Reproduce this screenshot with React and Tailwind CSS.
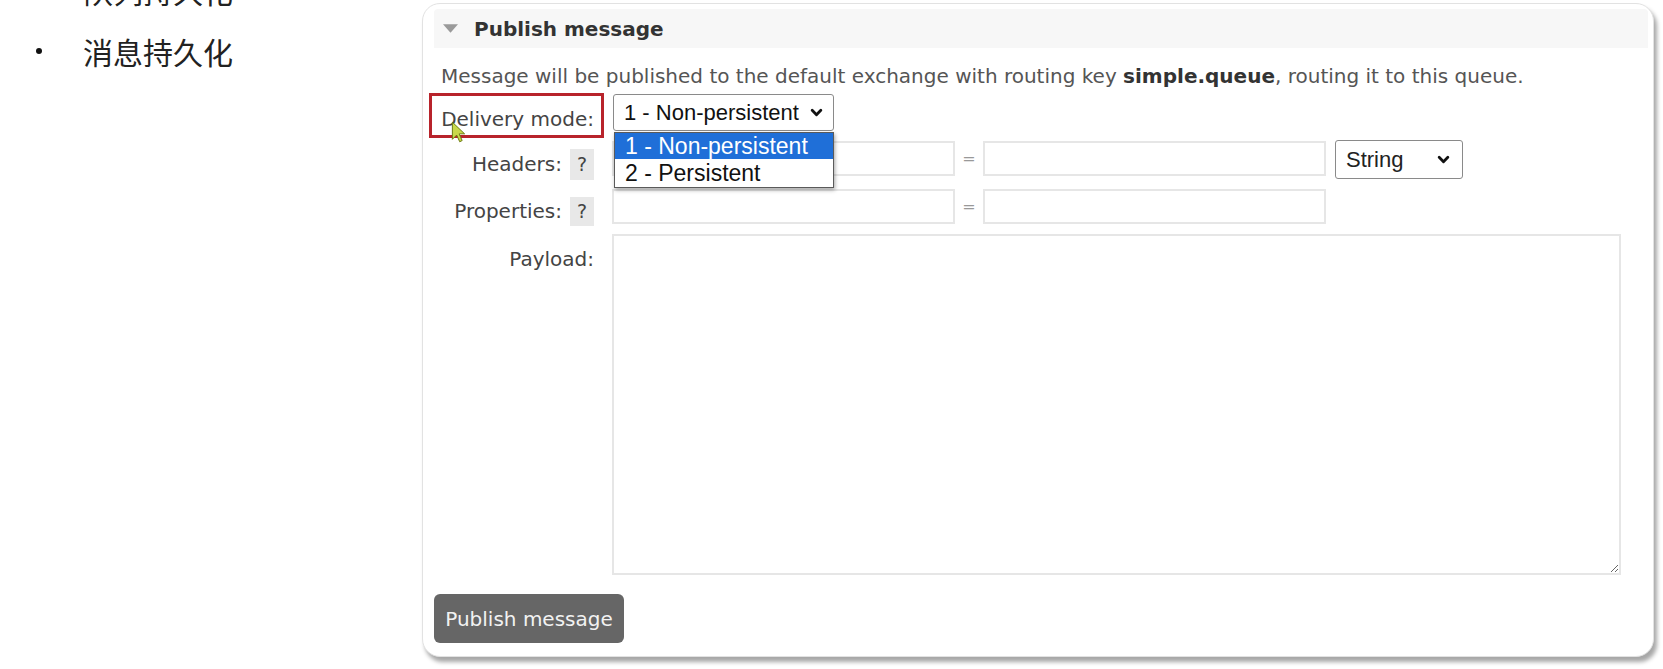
import React from "react";

const Chevron = ({ className }) => (
  <svg viewBox="0 0 12 8" className={className} fill="none" stroke="#111" strokeWidth="2.6" strokeLinecap="round" strokeLinejoin="round">
    <path d="M2 2 L6 6 L10 2" />
  </svg>
);

const Badge = ({ h }) => (
  <span className={`flex w-[24px] ${h} items-center justify-center bg-[#e8e8e8] text-[19px] text-[#444]`}>?</span>
);

export default function App() {
  return (
    <div className="relative flex h-[669px] w-[1663px] overflow-hidden bg-white font-['DejaVu_Sans',sans-serif]">
      <div className="flex w-[422px] shrink-0 flex-col font-['Noto_Sans_CJK_SC',sans-serif] text-[30px] font-normal text-[#222]">
        <div className="mt-[-30px] flex h-[40px] items-center">
          <span className="ml-[83px]">队列持久化</span>
        </div>
        <div className="mt-[21px] flex h-[40px] items-center">
          <span className="ml-[36px] h-[6px] w-[6px] rounded-full bg-[#111]"></span>
          <span className="ml-[41px]">消息持久化</span>
        </div>
      </div>

      <div className="mt-[3px] flex h-[654px] w-[1232px] shrink-0 flex-col rounded-[18px] border border-[#e2e2e2] bg-white shadow-[3px_5px_4px_rgba(0,0,0,0.35)]">
        <div className="ml-[11px] mt-[5px] flex h-[39px] w-[1214px] items-center rounded-t-[4px] bg-[#f7f7f7]">
          <svg viewBox="0 0 14 8" className="ml-[9px] h-[9px] w-[15px]">
            <path d="M0 0 L14 0 L7 8 Z" fill="#9a9a9a" />
          </svg>
          <span className="ml-[16px] text-[20px] font-bold text-[#333]">Publish message</span>
        </div>

        <p className="ml-[18px] mt-[16px] h-[24px] whitespace-nowrap text-[20px] leading-[24px] text-[#555]">
          Message will be published to the default exchange with routing key <b className="text-[#333]">simple.queue</b>, routing it to this queue.
        </p>

        <div className="ml-[6px] mt-[5px] flex flex-col">
          {/* Delivery mode */}
          <div className="flex h-[45px]">
            <div className="flex h-[45px] w-[175px] items-center justify-end border-[3px] border-[#b8232b] pr-[7px] pt-[6px] text-[20px] text-[#444]">
              Delivery mode:
            </div>
            <div className="relative ml-[9px] mt-[1px]">
              <div className="flex h-[37px] w-[221px] items-center justify-between rounded-[3px] border border-[#8a8a8a] bg-white pl-[10px] pr-[10px] font-['Liberation_Sans',sans-serif] text-[22px] text-[#111]">
                <span>1 - Non-persistent</span>
                <Chevron className="h-[9px] w-[13px]" />
              </div>
              <div className="absolute left-[1px] top-[38px] z-10 w-[220px] border border-[#5a5a5a] bg-white font-['Liberation_Sans',sans-serif] text-[23px] shadow-[1px_2px_4px_rgba(0,0,0,0.35)]">
                <div className="flex h-[26px] items-center bg-[#1f6fd8] pl-[10px] text-white">1 - Non-persistent</div>
                <div className="flex h-[28px] items-center pl-[10px] text-[#111]">2 - Persistent</div>
              </div>
            </div>
          </div>

          {/* Headers */}
          <div className="flex h-[47px]">
            <div className="flex w-[175px] items-start justify-end pr-[10px]">
              <span className="mt-[14px] text-[20px] leading-[24px] text-[#444]">Headers:</span>
              <span className="ml-[8px] mt-[11px]"><Badge h="h-[31px]" /></span>
            </div>
            <div className="ml-[8px] mt-[3px] flex items-start">
              <div className="h-[35px] w-[343px] border-2 border-[#e6e6e6] bg-white"></div>
              <span className="flex h-[35px] w-[28px] items-center justify-center text-[16px] text-[#999]">=</span>
              <div className="h-[35px] w-[343px] border-2 border-[#e6e6e6] bg-white"></div>
              <div className="ml-[9px] mt-[-1px] flex h-[39px] w-[128px] items-center justify-between rounded-[3px] border border-[#8a8a8a] bg-white pl-[10px] pr-[12px] font-['Liberation_Sans',sans-serif] text-[22px] text-[#222]">
                <span>String</span>
                <Chevron className="h-[9px] w-[13px]" />
              </div>
            </div>
          </div>

          {/* Properties */}
          <div className="flex h-[45px]">
            <div className="flex w-[175px] items-start justify-end pr-[10px]">
              <span className="mt-[14px] text-[20px] leading-[24px] text-[#444]">Properties:</span>
              <span className="ml-[8px] mt-[12px]"><Badge h="h-[29px]" /></span>
            </div>
            <div className="ml-[8px] mt-[4px] flex items-start">
              <div className="h-[35px] w-[343px] border-2 border-[#e6e6e6] bg-white"></div>
              <span className="flex h-[35px] w-[28px] items-center justify-center text-[16px] text-[#999]">=</span>
              <div className="h-[35px] w-[343px] border-2 border-[#e6e6e6] bg-white"></div>
            </div>
          </div>

          {/* Payload */}
          <div className="flex">
            <div className="flex w-[175px] items-start justify-end pr-[10px]">
              <span className="mt-[17px] text-[20px] leading-[24px] text-[#444]">Payload:</span>
            </div>
            <textarea className="ml-[8px] mt-[4px] h-[341px] w-[1009px] resize border-2 border-[#e6e6e6] bg-white outline-none"></textarea>
          </div>
        </div>

        <button className="ml-[11px] mt-[19px] flex h-[49px] w-[190px] items-center justify-center rounded-[6px] bg-[#666666] text-[20px] text-[#f2f2f2]">
          Publish message
        </button>
      </div>

      {/* mouse cursor */}
      <svg viewBox="0 0 12 18" className="absolute left-[451px] top-[121px] z-20 h-[22px] w-[15px]">
        <path d="M1 1 L1 15 L4.5 11.5 L7 17 L9 16 L6.5 10.5 L11 10.5 Z" fill="#c8d84a" stroke="#6a7a10" strokeWidth="0.8" />
      </svg>
    </div>
  );
}
